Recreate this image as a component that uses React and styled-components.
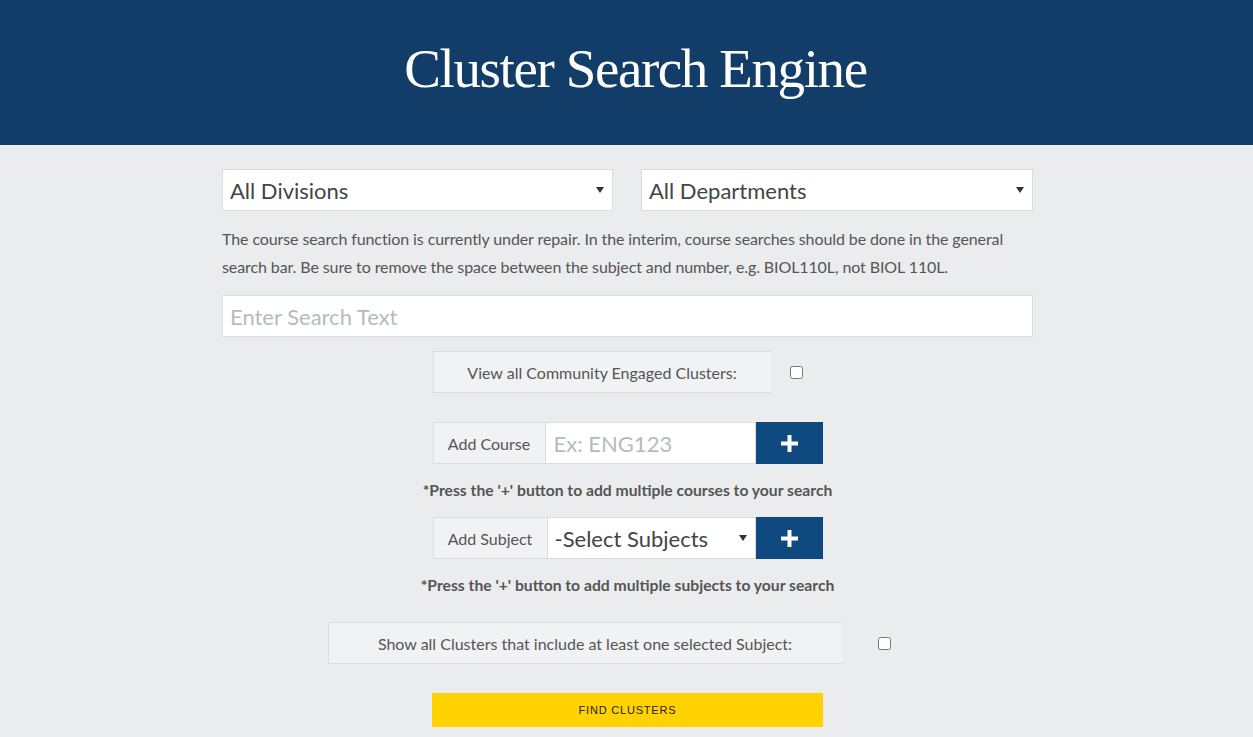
import React from 'react';
import styled, { createGlobalStyle } from 'styled-components';

const GlobalStyle = createGlobalStyle`
  html, body {
    margin: 0;
    padding: 0;
    background: #ebecee;
    font-family: Lato, "Open Sans", sans-serif;
    color: #555;
  }
  * { box-sizing: border-box; }
`;

const Header = styled.header`
  background: #133d69;
  height: 145px;
  display: flex;
  align-items: center;
  justify-content: center;
`;

const Title = styled.h1`
  margin: 0;
  padding-bottom: 8px;
  padding-left: 18px;
  color: #fff;
  font-family: "Liberation Serif", "DejaVu Serif", serif;
  font-weight: 400;
  font-size: 55px;
  letter-spacing: -1.4px;
`;

const Container = styled.main`
  width: 813px;
  margin: 0 auto;
  padding: 24px 0 0 2px;
`;

const SelectRow = styled.div`
  display: flex;
  justify-content: space-between;
`;

const SelectWrap = styled.div`
  position: relative;
  width: ${p => p.$width || '391px'};
  height: 42px;
`;

const Select = styled.select`
  appearance: none;
  width: 100%;
  height: 100%;
  border: 1px solid #dcdcdc;
  border-radius: 0;
  background: #fff;
  font-family: Lato, sans-serif;
  font-size: 22px;
  color: #444;
  padding: 0 30px 0 7px;
  outline: none;
`;

const Arrow = styled.span`
  position: absolute;
  right: 9px;
  top: 18px;
  width: 0;
  height: 0;
  border-left: 4px solid transparent;
  border-right: 4px solid transparent;
  border-top: 6px solid #333;
  pointer-events: none;
`;

const Notice = styled.p`
  margin: 14px 0 14px;
  font-size: 16px;
  letter-spacing: -0.1px;
  line-height: 28px;
  color: #555;
`;

const SearchInput = styled.input`
  width: 100%;
  height: 42px;
  border: 1px solid #dcdcdc;
  background: #fff;
  font-family: Lato, sans-serif;
  font-size: 22px;
  color: #444;
  padding: 0 7px;
  outline: none;
  &::placeholder { color: #b3bdbd; }
`;

const Group = styled.div`
  display: flex;
  width: ${p => p.$width};
  height: 42px;
  margin: ${p => p.$margin || '0 auto'};
`;

const Addon = styled.div`
  width: ${p => p.$width};
  flex-shrink: 0;
  display: flex;
  align-items: center;
  justify-content: center;
  background: #f1f2f4;
  border: 1px solid #dcdcdc;
  border-right: none;
  font-size: 16px;
  color: #555;
`;

const CheckCell = styled.div`
  flex: 1;
  display: flex;
  align-items: center;
  justify-content: center;
  input { margin: 0; width: 13px; height: 13px; }
`;

const CourseInput = styled.input`
  width: 211px;
  height: 42px;
  border: 1px solid #dcdcdc;
  background: #fff;
  font-family: Lato, sans-serif;
  font-size: 22px;
  color: #444;
  padding: 0 8px;
  outline: none;
  &::placeholder { color: #b3bdbd; }
`;

const PlusButton = styled.button`
  width: 67px;
  height: 42px;
  border: none;
  background: #0e4a80;
  display: flex;
  align-items: center;
  justify-content: center;
  cursor: pointer;
`;

const Hint = styled.p`
  margin: ${p => p.$margin || '17px 0 17px'};
  height: 19px;
  line-height: 19px;
  text-align: center;
  font-size: 15.7px;
  font-weight: 700;
  color: #555;
`;

const FindButton = styled.button`
  display: block;
  width: 391px;
  height: 34px;
  margin: 29px auto 0;
  border: none;
  background: #ffd200;
  font-family: "Liberation Sans", Arial, sans-serif;
  font-size: 11px;
  letter-spacing: 0.8px;
  color: #222;
  cursor: pointer;
`;

const Plus = () => (
  <svg width="17" height="17" viewBox="0 0 17 17">
    <rect x="6.5" y="0" width="4" height="17" fill="#fff" />
    <rect x="0" y="6.5" width="17" height="4" fill="#fff" />
  </svg>
);

export default function App() {
  return (
    <>
      <GlobalStyle />
      <Header>
        <Title>Cluster Search Engine</Title>
      </Header>
      <Container>
        <SelectRow>
          <SelectWrap>
            <Select defaultValue="all"><option value="all">All Divisions</option></Select>
            <Arrow />
          </SelectWrap>
          <SelectWrap $width="392px">
            <Select defaultValue="all"><option value="all">All Departments</option></Select>
            <Arrow />
          </SelectWrap>
        </SelectRow>
        <Notice>
          The course search function is currently under repair. In the interim, course searches should be done in the general
          search bar. Be sure to remove the space between the subject and number, e.g. BIOL110L, not BIOL 110L.
        </Notice>
        <SearchInput placeholder="Enter Search Text" />
        <Group $width="390px" $margin="14px auto 29px">
          <Addon $width="338px">View all Community Engaged Clusters:</Addon>
          <CheckCell><input type="checkbox" /></CheckCell>
        </Group>
        <Group $width="390px">
          <Addon $width="112px">Add Course</Addon>
          <CourseInput placeholder="Ex: ENG123" />
          <PlusButton><Plus /></PlusButton>
        </Group>
        <Hint>*Press the '+' button to add multiple courses to your search</Hint>
        <Group $width="390px">
          <Addon $width="114px">Add Subject</Addon>
          <SelectWrap $width="209px">
            <Select defaultValue="none"><option value="none">-Select Subjects</option></Select>
            <Arrow />
          </SelectWrap>
          <PlusButton><Plus /></PlusButton>
        </Group>
        <Hint $margin="17px 0 27px">*Press the '+' button to add multiple subjects to your search</Hint>
        <Group $width="600px">
          <Addon $width="514px">Show all Clusters that include at least one selected Subject:</Addon>
          <CheckCell><input type="checkbox" /></CheckCell>
        </Group>
        <FindButton>FIND CLUSTERS</FindButton>
      </Container>
    </>
  );
}
